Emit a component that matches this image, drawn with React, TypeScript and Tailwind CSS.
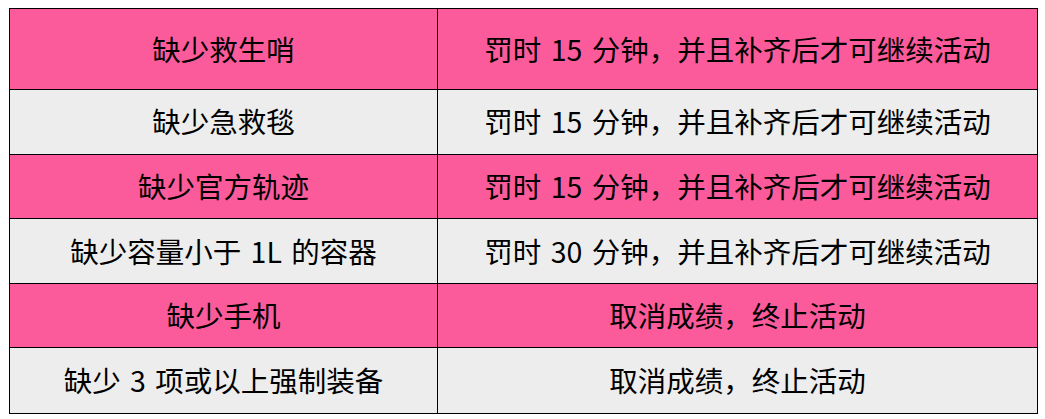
const rows = [
  { item: "缺少救生哨", penalty: "罚时 15 分钟，并且补齐后才可继续活动", pink: true, tall: true },
  { item: "缺少急救毯", penalty: "罚时 15 分钟，并且补齐后才可继续活动", pink: false },
  { item: "缺少官方轨迹", penalty: "罚时 15 分钟，并且补齐后才可继续活动", pink: true },
  { item: "缺少容量小于 1L 的容器", penalty: "罚时 30 分钟，并且补齐后才可继续活动", pink: false },
  { item: "缺少手机", penalty: "取消成绩，终止活动", pink: true },
  { item: "缺少 3 项或以上强制装备", penalty: "取消成绩，终止活动", pink: false },
];

export default function App() {
  return (
    <div className="w-[1045px] h-[419px] bg-white pt-[8px] pl-[9px] font-['Microsoft_YaHei','Noto_Sans_CJK_SC',sans-serif] text-[28.5px] text-black">
      <div className="w-[1029px] border border-black">
        {rows.map((row, i) => (
          <div
            key={i}
            className={`grid grid-cols-[428px_1fr] ${row.tall ? "h-[81px]" : "h-[64.6px]"} ${row.pink ? "bg-[#fc5b9b]" : "bg-[#ededed]"} ${i !== rows.length - 1 ? "border-b border-black" : ""}`}
          >
            <div className="flex items-center justify-center border-r border-black [word-spacing:3px]">{row.item}</div>
            <div className="flex items-center justify-center [word-spacing:3px]">{row.penalty}</div>
          </div>
        ))}
      </div>
    </div>
  );
}
